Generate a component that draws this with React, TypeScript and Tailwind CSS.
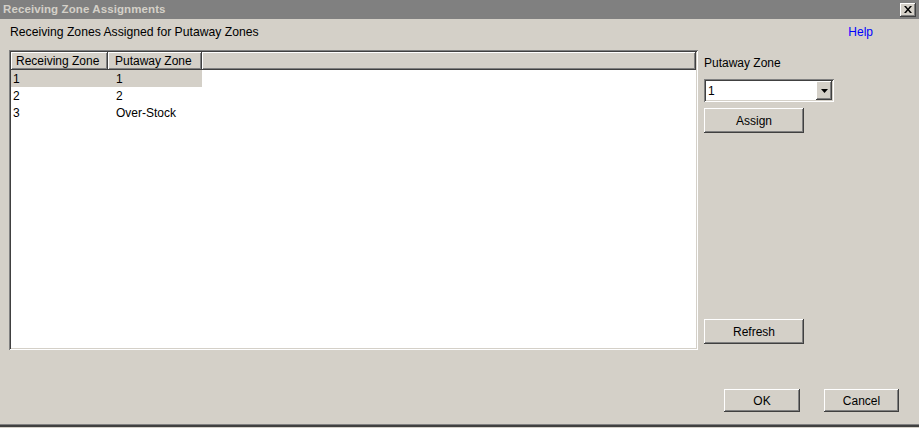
import React from 'react';

const raised =
  'bg-[#d4d0c8] shadow-[inset_-1px_-1px_#404040,inset_1px_1px_#ffffff,inset_-2px_-2px_#808080]';
const sunken =
  'shadow-[inset_1px_1px_#808080,inset_-1px_-1px_#ffffff,inset_2px_2px_#404040,inset_-2px_-2px_#d4d0c8]';

const rows = [
  { rz: '1', pz: '1' },
  { rz: '2', pz: '2' },
  { rz: '3', pz: 'Over-Stock' },
];

function Button({ label, className }: { label: string; className: string }) {
  return (
    <button className={`${raised} ${className} flex items-center justify-center text-[12px] text-black`}>
      {label}
    </button>
  );
}

export default function App() {
  return (
    <div
      className="w-[919px] h-[428px] bg-[#d4d0c8] flex flex-col overflow-hidden"
      style={{ fontFamily: '"Liberation Sans", Arial, sans-serif' }}
    >
      {/* Title bar */}
      <div className="h-[19px] bg-[#808080] flex items-center justify-between pl-[3px] pr-[3px]">
        <span className="text-[11.5px] font-bold text-[#d4d0c8] tracking-[0.1px]">Receiving Zone Assignments</span>
        <div className={`${raised} w-[16px] h-[14px] flex items-center justify-center`}>
          <svg width="8" height="7" viewBox="0 0 8 7">
            <path d="M0 0h2l2 2.5L6 0h2L5 3.5 8 7H6L4 4.5 2 7H0l3-3.5z" fill="#000" />
          </svg>
        </div>
      </div>

      {/* Heading row */}
      <div className="h-[25px] flex items-center justify-between pl-[10px] pr-[46px] pt-[1px]">
        <span className="text-[12.2px] text-black">Receiving Zones Assigned for Putaway Zones</span>
        <span className="text-[12px] text-[#0000ff]">Help</span>
      </div>

      <div className="flex flex-1 pt-[6px]">
        {/* Table */}
        <div className={`${sunken} ml-[9px] w-[689px] h-[300px] p-[2px]`}>
          <div className="w-full h-full bg-white flex flex-col text-[12px] text-black">
            <div className="flex h-[18px] shrink-0 shadow-[inset_0_-1px_#404040]">
              <div className={`${raised} w-[97px] h-full flex items-center pl-[5px]`}>Receiving Zone</div>
              <div className={`${raised} w-[94px] h-full flex items-center pl-[7px]`}>Putaway Zone</div>
              <div className={`${raised} flex-1 h-full`} />
            </div>
            {rows.map((r, i) => (
              <div
                key={r.rz}
                className={`flex w-[191px] h-[17px] items-center ${i === 0 ? 'bg-[#d4d0c8]' : ''}`}
              >
                <span className="w-[105px] pl-[2px]">{r.rz}</span>
                <span>{r.pz}</span>
              </div>
            ))}
          </div>
        </div>

        {/* Right panel */}
        <div className="ml-[6px] w-[130px] flex flex-col">
          <span className="text-[12px] text-black mt-[5px] h-[16px] leading-[16px]">Putaway Zone</span>
          <div className={`mt-[8px] w-[130px] h-[23px] p-[2px] ${sunken}`}>
            <div className="w-full h-full bg-white flex items-center">
              <span className="flex-1 text-[12px] text-black pl-[2px]">1</span>
              <div className={`${raised} w-[16px] h-full flex items-center justify-center`}>
                <svg width="7" height="4" viewBox="0 0 7 4">
                  <path d="M0 0h7L3.5 4z" fill="#000" />
                </svg>
              </div>
            </div>
          </div>
          <Button label="Assign" className="mt-[6px] w-[100px] h-[25px]" />
          <Button label="Refresh" className="mt-[186px] w-[100px] h-[25px]" />
        </div>
      </div>

      {/* OK / Cancel */}
      <div className="flex justify-end gap-[24px] pr-[20px] pb-[12px]">
        <Button label="OK" className="w-[76px] h-[23px]" />
        <Button label="Cancel" className="w-[75px] h-[23px]" />
      </div>

      {/* bottom frame edge */}
      <div className="h-[1px] bg-[#808080]" />
      <div className="h-[2px] bg-[#404040]" />
      <div className="h-[1px] bg-[#d4d0c8]" />
    </div>
  );
}
